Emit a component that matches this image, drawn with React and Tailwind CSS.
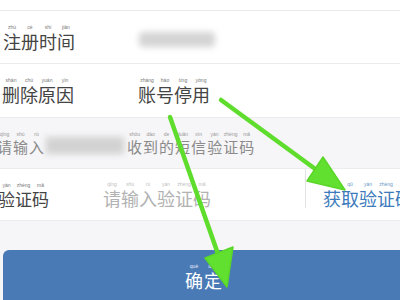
import React from "react";

const Py = ({ c, p, pc = "text-[#777]" }) => (
  <span className="inline-flex flex-col items-center leading-none">
    <span className={"text-[5px] leading-none mb-[2px] whitespace-nowrap " + pc} style={{ fontFamily: "'Liberation Sans', sans-serif" }}>{p}</span>
    <span className="leading-none">{c}</span>
  </span>
);

const Word = ({ chars, pys, className = "", pc, gap = "gap-0" }) => (
  <span className={"inline-flex shrink-0 items-end whitespace-nowrap " + gap + " " + className}>
    {chars.split("").map((c, i) => (
      <Py key={i} c={c} p={pys[i]} pc={pc} />
    ))}
  </span>
);

export default function App() {
  return (
    <div
      className="relative w-[400px] h-[300px] overflow-hidden bg-[#f6f5f7]"
      style={{ fontFamily: "'Noto Sans CJK SC', 'Noto Sans', sans-serif" }}
    >
      <div className="h-[11px] bg-white border-b border-[#ececec]" />
      <div className="h-[53px] bg-white border-b border-[#ececec] flex items-center">
        <Word className="ml-[3px] text-[18px] text-[#444]" chars="注册时间" pys={["zhù", "cè", "shí", "jiān"]} />
        <div className="ml-[64px] mt-[4px] w-[76px] h-[15px] shrink-0 bg-[#d4d4d4] blur-[3px] rounded" />
      </div>
      <div className="h-[54px] bg-white border-b border-[#ececec] flex items-center">
        <Word className="ml-[2px] text-[18px] text-[#444]" chars="删除原因" pys={["shān", "chú", "yuán", "yīn"]} />
        <Word className="ml-[64px] text-[18px] text-[#444]" chars="账号停用" pys={["zhàng", "hào", "tíng", "yòng"]} />
      </div>
      <div className="h-[51px] bg-[#f6f5f7] border-b border-[#ececec] flex items-center">
        <Word className="-ml-[3px] text-[15px] text-[#8a8a8a]" chars="请输入" pys={["qǐng", "shū", "rù"]} pc="text-[#999]" gap="gap-[1px]" />
        <div className="ml-[2px] mt-[4px] w-[78px] h-[17px] shrink-0 bg-[#d2d2d2] blur-[3px]" />
        <Word className="ml-[3px] text-[15px] text-[#8a8a8a]" chars="收到的短信验证码" pys={["shōu", "dào", "de", "duǎn", "xìn", "yàn", "zhèng", "mǎ"]} pc="text-[#999]" gap="gap-[1px]" />
      </div>
      <div className="h-[52px] bg-white border-b border-[#ececec] flex items-stretch">
        <div className="flex items-center w-[305px] shrink-0">
          <Word className="-ml-[2px] text-[17px] text-[#444]" chars="验证码" pys={["yàn", "zhèng", "mǎ"]} />
          <Word className="ml-[54px] text-[18px] text-[#b2b2b2]" chars="请输入验证码" pys={["qǐng", "shū", "rù", "yàn", "zhèng", "mǎ"]} pc="text-[#c0c0c0]" />
        </div>
        <div className="w-px h-[39px] shrink-0 bg-[#e2e2e2]" />
        <div className="flex items-center pl-[17px] shrink-0">
          <Word className="text-[18px] text-[#3d7bbd]" chars="获取验证码" pys={["huò", "qǔ", "yàn", "zhèng", "mǎ"]} pc="text-[#6b98c8]" />
        </div>
      </div>
      <div className="h-[29px]" />
      <div className="h-[50px] ml-[3px] rounded-tl-[6px] bg-[#4a7ab6] flex items-center justify-center">
        <Word className="mt-[2px] ml-[4px] text-[18px] text-white" chars="确定" pys={["què", "dìng"]} pc="text-[#e8eef6]" gap="gap-[1px]" />
      </div>
      <svg className="absolute inset-0 pointer-events-none" width="400" height="300" viewBox="0 0 400 300">
        <line x1="221" y1="100" x2="318" y2="171" stroke="#5fdd2c" strokeWidth="4.5" strokeLinecap="round" />
        <polygon points="307,181 323,157 345,190" fill="#62e030" stroke="#5ad628" strokeWidth="1.5" strokeLinejoin="round" />
        <line x1="170" y1="117" x2="218" y2="254" stroke="#5fdd2c" strokeWidth="4.5" strokeLinecap="round" />
        <polygon points="205,258 233,247 227,287" fill="#62e030" stroke="#5ad628" strokeWidth="1.5" strokeLinejoin="round" />
      </svg>
    </div>
  );
}
